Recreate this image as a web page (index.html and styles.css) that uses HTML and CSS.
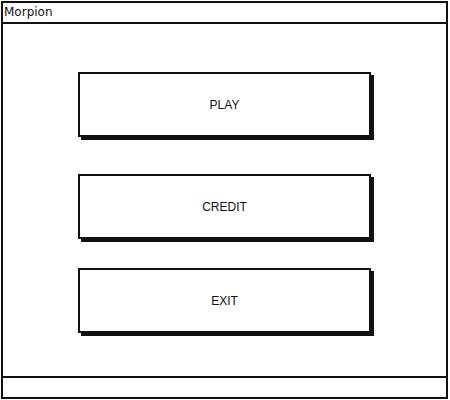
FILE: index.html
```html
<!DOCTYPE html>
<html>
<head>
<meta charset="utf-8">
<link rel="stylesheet" href="styles.css">
</head>
<body>
<div class="window">
  <div class="titlebar">Morpion</div>
  <div class="content">
    <div class="btn btn-play">PLAY</div>
    <div class="btn btn-credit">CREDIT</div>
    <div class="btn btn-exit">EXIT</div>
  </div>
  <div class="footer"></div>
</div>
</body>
</html>
```
FILE: styles.css
```css
html, body {
  margin: 0;
  padding: 0;
  background: #fff;
}
body {
  padding: 1px 0 0 1px;
}
.window {
  box-sizing: border-box;
  width: 447px;
  height: 398px;
  border: 2px solid #111;
  display: flex;
  flex-direction: column;
  background: #fff;
}
.titlebar {
  height: 19px;
  border-bottom: 2px solid #111;
  font-family: "DejaVu Sans", sans-serif;
  font-size: 12px;
  line-height: 19px;
  padding-left: 1px;
  color: #111;
}
.content {
  flex: 1;
  display: flex;
  flex-direction: column;
  align-items: flex-start;
  padding-top: 48px;
}
.btn {
  box-sizing: border-box;
  width: 293px;
  height: 65px;
  margin-left: 75px;
  border: 2px solid #111;
  box-shadow: 3px 3px 0 #111;
  display: flex;
  align-items: center;
  justify-content: center;
  font-family: "Liberation Sans", Arial, sans-serif;
  font-size: 12px;
  color: #111;
  background: #fff;
}
.btn-credit {
  margin-top: 37px;
}
.btn-exit {
  margin-top: 29px;
}
.footer {
  height: 19px;
  border-top: 2px solid #111;
}
```
